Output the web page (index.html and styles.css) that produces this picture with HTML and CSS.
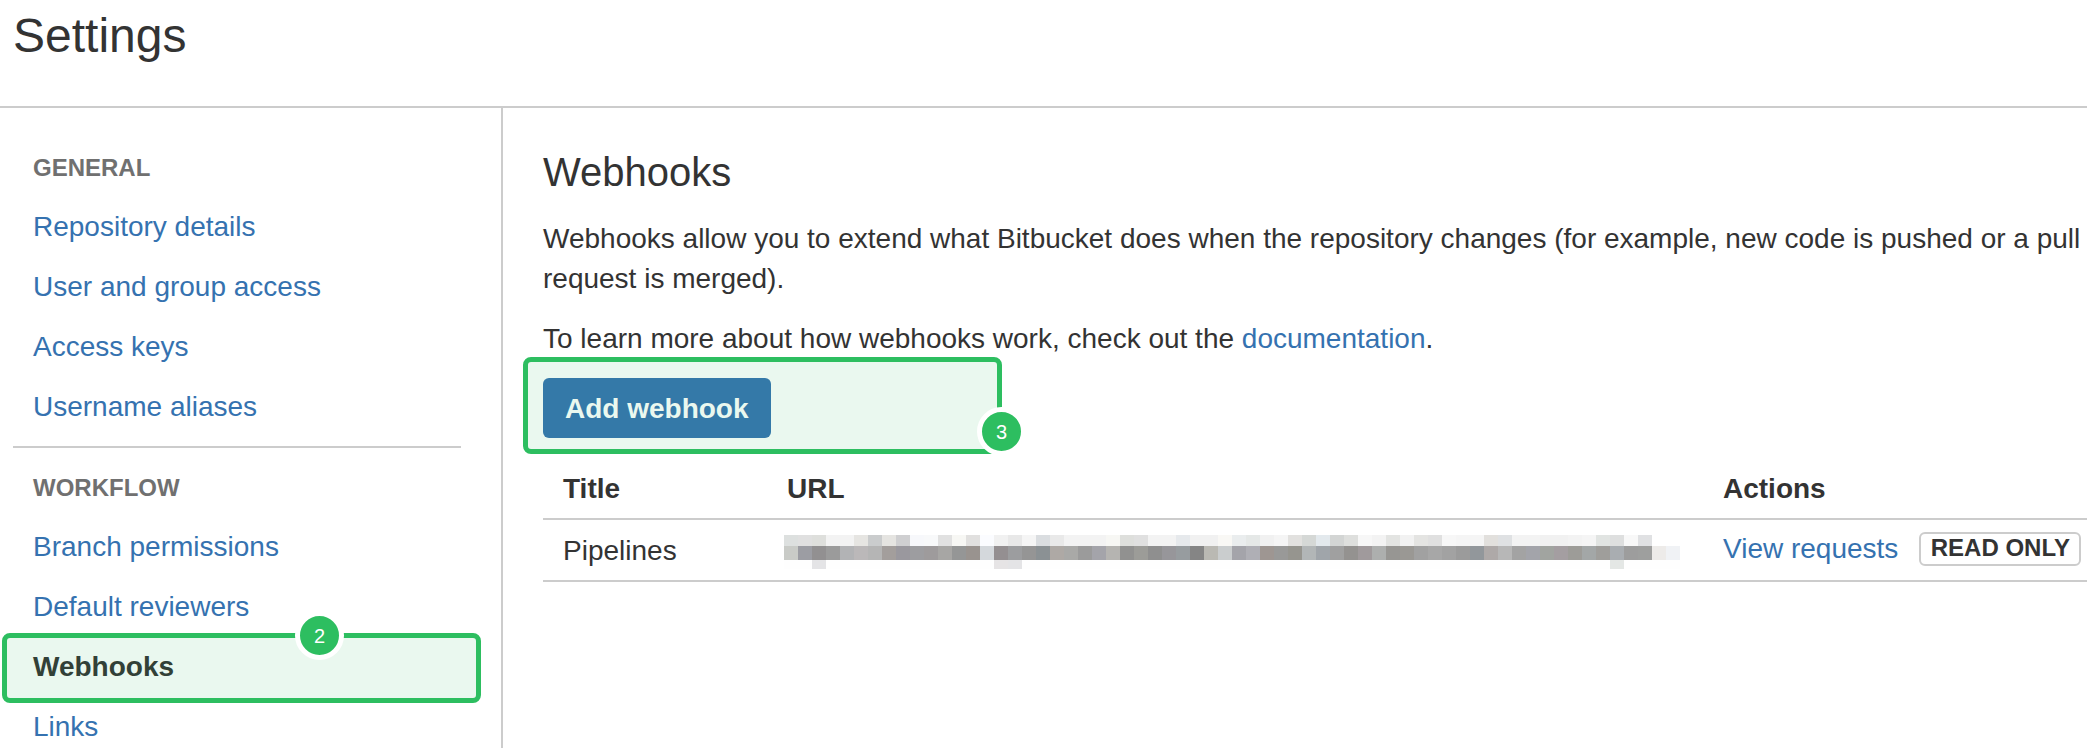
FILE: index.html
```html
<!DOCTYPE html>
<html lang="en">
<head>
<meta charset="utf-8">
<title>Settings</title>
<link rel="stylesheet" href="styles.css">
</head>
<body>
<header class="page-header"><h1 class="page-title">Settings</h1></header>
<div class="page-body">
  <nav class="sidebar">
    <section class="nav-group">
      <h2 class="nav-heading">GENERAL</h2>
      <ul class="nav-list">
        <li><a class="link" href="#">Repository details</a></li>
        <li><a class="link" href="#">User and group access</a></li>
        <li><a class="link" href="#">Access keys</a></li>
        <li><a class="link" href="#">Username aliases</a></li>
      </ul>
    </section>
    <section class="nav-group">
      <h2 class="nav-heading">WORKFLOW</h2>
      <ul class="nav-list">
        <li><a class="link" href="#">Branch permissions</a></li>
        <li><a class="link" href="#">Default reviewers</a></li>
        <li class="nav-current">Webhooks
          <div class="callout callout-nav"><span class="step step-top">2</span></div>
        </li>
        <li><a class="link" href="#">Links</a></li>
      </ul>
    </section>
  </nav>
  <main class="content">
    <h2 class="content-title">Webhooks</h2>
    <p class="text">Webhooks allow you to extend what Bitbucket does when the repository changes (for example, new code is pushed or a pull request is merged).</p>
    <p class="text text-last">To learn more about how webhooks work, check out the <a class="link" href="#">documentation</a>.</p>
    <div class="toolbar">
      <button class="button" type="button">Add webhook</button>
      <div class="callout callout-button"><span class="step step-corner">3</span></div>
    </div>
    <div class="hooks">
      <div class="row row-head"><span>Title</span><span>URL</span><span>Actions</span></div>
      <div class="row">
        <span>Pipelines</span>
        <div class="redacted" id="redacted"></div>
        <div class="actions"><a class="link" href="#">View requests</a><span class="lozenge">READ ONLY</span></div>
      </div>
    </div>
  </main>
</div>
<script src="script.js"></script>
</body>
</html>
```
FILE: styles.css
```css
* { box-sizing: border-box; }
body {
  margin: 0;
  height: 748px;
  overflow: hidden;
  display: flex;
  flex-direction: column;
  background: #fff;
  color: #333;
  font: 28px/40px "Liberation Sans", Arial, sans-serif;
}
h1, h2, p, ul { margin: 0; padding: 0; font-weight: normal; }
ul { list-style: none; }
.link { color: #3572b0; text-decoration: none; }

.page-header {
  flex: none;
  height: 108px;
  padding: 8px 13px 0;
  border-bottom: 2px solid #ccc;
}
.page-title { font-size: 48px; line-height: 56px; }
.page-body { flex: 1; min-height: 0; display: flex; }

.sidebar {
  flex: none;
  width: 503px;
  padding: 28px 40px 0 13px;
  border-right: 2px solid #ccc;
}
.nav-group { padding: 0 20px 10px; }
.nav-group + .nav-group { border-top: 2px solid #ccc; padding-top: 8px; }
.nav-heading {
  height: 60px;
  padding-top: 16px;
  color: #707070;
  font-size: 24px;
  font-weight: bold;
  line-height: 32px;
}
.nav-list li { height: 60px; line-height: 62px; white-space: nowrap; }
.nav-list .nav-current { position: relative; font-weight: bold; }

.content { flex: 1; min-width: 0; padding: 38px 0 0 40px; }
.content-title { font-size: 40px; line-height: 52px; margin-bottom: 21px; }
.text { margin-bottom: 20px; }
.text-last { margin-bottom: 19px; }
.toolbar { position: relative; height: 80px; }
.button {
  height: 60px;
  padding: 2px 22px 0;
  border: 0;
  border-radius: 6px;
  background: #3572b0;
  color: #fff;
  font: bold 28px/58px "Liberation Sans", Arial, sans-serif;
  display: block;
}

.row {
  display: grid;
  grid-template-columns: 224px 936px 1fr;
  height: 62px;
  padding-left: 20px;
  line-height: 62px;
  border-bottom: 2px solid #ccc;
}
.row-head { font-weight: bold; }
.actions { display: flex; align-items: flex-start; line-height: 58px; white-space: nowrap; }
.lozenge {
  width: 162px;
  height: 34px;
  margin: 12px 0 0 21px;
  border: 2px solid #ccc;
  border-radius: 6px;
  font-size: 24px;
  font-weight: bold;
  line-height: 28px;
  text-align: center;
}
.redacted {
  display: grid;
  grid-template-columns: repeat(64, 14px);
  grid-template-rows: 11px 14px 9px;
  margin: 15px 0 0 -3px;
}

.callout {
  position: absolute;
  border: 5px solid #2dbe60;
  border-radius: 8px;
  background: rgba(45, 190, 96, .1);
}
.callout-nav { left: -31px; top: -3px; width: 479px; height: 70px; }
.callout-button { left: -20px; top: -21px; width: 479px; height: 97px; }
.step {
  position: absolute;
  width: 49px;
  height: 49px;
  border: 5px solid #fff;
  border-radius: 50%;
  background: #2dbe60;
  color: #fff;
  font-size: 20px;
  font-weight: normal;
  line-height: 41px;
  text-align: center;
}
.step-top { left: 288px; top: -27px; }
.step-corner { left: 449px; top: 45px; }
```
FILE: script.js
```js
// Mosaic rows that cover the webhook URL, one colour per cell.
const top_ = "dde0df e0e0e0 dedfdc f3f3f3 f3f3f3 e6e5e2 cacccd e5e4e1 cfcfd1 f7f8fb f8f9fa e1e1e1 f7f7f4 e1e0df fbfcff f1f1f1 e8e8e8 f5f5f5 dadde0 e9e9e9 f3f3f3 f3f3f3 f3f3f3 f7f7f4 dedfdc e0e0e0 f3f3f3 f3f3f3 e6e9ec f1f1f1 f1f1f1 f9f8f5 eaedee e5e8e7 f1f1f1 f5f5f5 e2e1df d5d8d6 e3e9ed d3d5d4 dedfdd f7f7f7 f3f3f3 e3e4e2 f2f2f2 e4e4e2 e0e0e0 f7f7f7 f5f5f5 f5f5f5 e2e0dd dfe1e3 f3f3f3 f3f3f3 f1f1f1 f1f1f1 f3f3f3 f5f5f5 e1e4e2 dedfdf f8f8f8 e0e1e3 ffffff ffffff".split(" ");
const middle = "c9cbc7 9c9da3 929091 9b9b9b b2b3b5 bbb8b9 b5b5b5 a39e9c 9a989e 9d9da0 9e9b9c a7a6a4 959696 99938f d4d8dc 948f91 9c9d9f 959595 8b9194 aea9a5 a9a9a7 9b9b9b a4a4aa b5b4b1 919190 9c9c98 8f8f8f 97969a 979c9f 858585 bab9b3 cacdce a4a4aa afafb5 9e9692 999998 96958f b2b6b7 a0a5aa a0a0a0 949290 a09a9c adafae 979693 9a9894 a1a1a1 a7a7a7 a2a2a2 9b9b9b 92979b aea9a8 b7b7b7 a3a3a3 a3a4aa a1a4a0 a49ea1 9d9c98 a3a7a7 9f9e9b a9adb1 9d9d9d 9e9f9e edebe9 f0f2f5".split(" ");
const bottom = Array(64).fill("fefefe");
Object.assign(bottom, { 2: "e4e4e6", 15: "e6e4e5", 16: "e4e4e6", 59: "e4e7e5" });

const box = document.getElementById("redacted");
for (const color of [...top_, ...middle, ...bottom]) {
  const cell = document.createElement("i");
  cell.style.background = "#" + color;
  box.append(cell);
}
```
